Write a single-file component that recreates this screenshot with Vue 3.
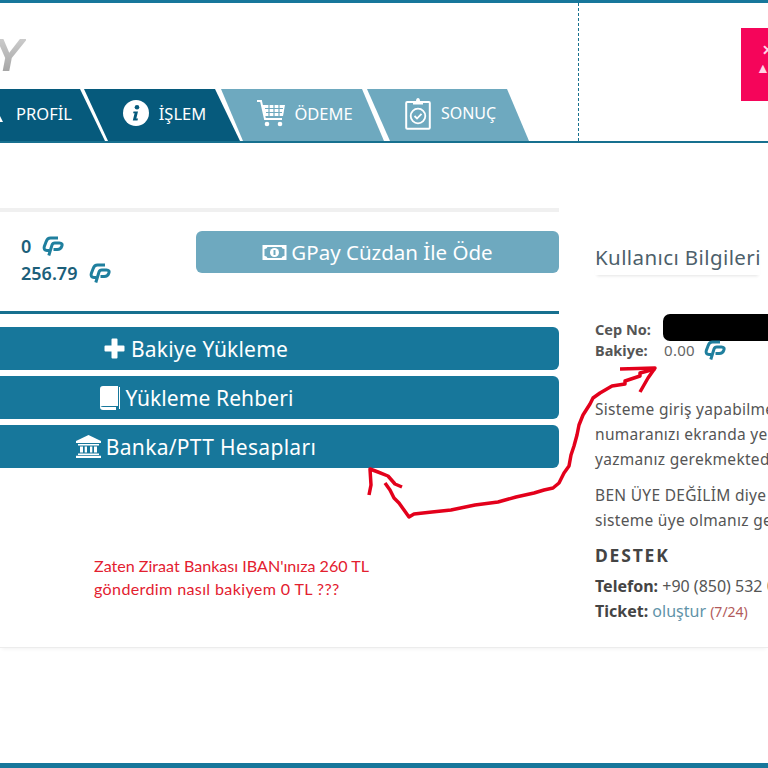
<script setup>
const tabs = [
  { id: 'profil', label: 'PROFİL', cls: 'tab-first' },
  { id: 'islem', label: 'İŞLEM', cls: 'tab-second' },
  { id: 'odeme', label: 'ÖDEME', cls: 'tab-third' },
  { id: 'sonuc', label: 'SONUÇ', cls: 'tab-fourth' },
];

// elle çizilmiş kırmızı ok
const longArrow = '655,369 640,373 640,376 625,381 625,384 612,386 600,393 593,398 590,404 583,415 579,425 577,435 574,446 571,455 569,466 564,473 559,483 553,488 544,490 534,493 516,497 498,502 475,505 451,510 432,512 414,514 409,517 404,510 399,503 394,498 390,490 385,483';
</script>

<template>
  <div class="page">
    <svg class="hidden-defs" width="0" height="0">
      <symbol id="gp" viewBox="0 0 22 20">
        <path d="M16 2H8.500C6.500 2 5 3.200 4.200 5.400L2.300 10.500C1.500 13 2.600 14.500 5 14.500H7" fill="none" stroke="currentColor" stroke-width="3" />
        <path d="M6.800 19.500 10 9C10.500 7.500 11.300 7 12.800 7H17.500C19.800 7 20.600 8.300 19.800 10.200 19 12.500 17.400 13.500 15.200 13.500H11.500" fill="none" stroke="currentColor" stroke-width="3" />
      </symbol>
    </svg>

    <header class="top">
      <div class="top-left">
        <div class="logo">Y</div>
        <nav class="tabs">
          <div v-for="tab in tabs" :key="tab.id" class="tab" :class="tab.cls">
            <svg v-if="tab.id === 'profil'" class="ico-person" width="6" height="12" viewBox="0 0 6 12"><path d="M0 1 5 11H0Z" fill="#fff" /></svg>
            <svg v-if="tab.id === 'islem'" class="ico" width="26" height="26" viewBox="0 0 26 26">
              <circle cx="13" cy="13" r="13" fill="#fff" />
              <circle cx="14" cy="7.200" r="2.300" fill="#065a7c" />
              <path d="M10.500 11.500H15L13.300 18.600H15L14.500 20.500H9.800L11.600 13.300H10.100Z" fill="#065a7c" />
            </svg>
            <svg v-if="tab.id === 'odeme'" class="ico" width="30" height="30" viewBox="0 0 30 30">
              <path d="M1 3H5L9 21H26" fill="none" stroke="#fff" stroke-width="2" />
              <path d="M6 7H29L27 18H8.500Z" fill="#fff" />
              <path d="M9 10.500H27M10 14.500H26M13 7V18M18 7V18M23 7V18" stroke="#6ea9bf" stroke-width="1.200" />
              <circle cx="11" cy="26" r="2.300" fill="#fff" />
              <circle cx="24" cy="26" r="2.300" fill="#fff" />
            </svg>
            <svg v-if="tab.id === 'sonuc'" class="ico" width="26" height="34" viewBox="0 0 26 34">
              <rect x="1.200" y="6" width="23.600" height="26.800" rx="1" fill="none" stroke="#fff" stroke-width="2" />
              <path d="M8 8.500V5H11C11 1 15 1 15 5H18V8.500Z" fill="#fff" />
              <circle cx="13" cy="20" r="7.300" fill="none" stroke="#fff" stroke-width="1.800" />
              <path d="M9.500 20 12 22.500 16.500 17.800" fill="none" stroke="#fff" stroke-width="1.800" />
            </svg>
            <span>{{ tab.label }}</span>
          </div>
        </nav>
      </div>
      <div class="top-right">
        <div class="promo">
          <span class="promo-x">✕</span>
          <span class="promo-tri">▲</span>
        </div>
      </div>
    </header>

    <main class="content">
      <section class="left">
        <div class="wallet">
          <div class="amounts">
            <div class="amount first">0 <svg class="gp" width="22" height="20"><use href="#gp" /></svg></div>
            <div class="amount">256.79 <svg class="gp" width="22" height="20"><use href="#gp" /></svg></div>
          </div>
          <button class="btn light">
            <svg width="25" height="15" viewBox="0 0 24 15">
              <path fill-rule="evenodd" d="M0 0H24V15H0ZM2 4V11A3 3 0 0 1 5 13H19A3 3 0 0 1 22 11V4A3 3 0 0 1 19 2H5A3 3 0 0 1 2 4Z" fill="#fff" />
              <circle cx="12" cy="7.500" r="4.500" fill="#fff" />
              <rect x="11" y="5" width="2" height="5" fill="#6ea9bf" />
            </svg>
            GPay Cüzdan İle Öde
          </button>
        </div>

        <div class="actions">
          <button class="btn">
            <svg width="21" height="21" viewBox="0 0 21 21"><path d="M7.500 1.500A1 1 0 0 1 8.500.5H12.500A1 1 0 0 1 13.500 1.500V7.500H19.500A1 1 0 0 1 20.500 8.500V12.500A1 1 0 0 1 19.500 13.500H13.500V19.500A1 1 0 0 1 12.500 20.500H8.500A1 1 0 0 1 7.500 19.500V13.500H1.500A1 1 0 0 1 .5 12.500V8.500A1 1 0 0 1 1.500 7.500H7.500Z" fill="#fff" /></svg>
            Bakiye Yükleme
          </button>
          <button class="btn tight">
            <svg width="21" height="24" viewBox="0 0 21 24">
              <path d="M4 0H19V20H4C2 20 1 21 1 22V3C1 1 2 0 4 0Z" fill="#fff" />
              <path d="M1 21C1 23 2 24 4 24H17V21Z" fill="#fff" />
              <path d="M20.500 1V23" stroke="#fff" stroke-width="1" />
            </svg>
            Yükleme Rehberi
          </button>
          <button class="btn bank">
            <svg width="25" height="23" viewBox="0 0 25 23">
              <path d="M12.500 0 25 6V8H0V6Z" fill="#fff" />
              <path d="M2 9H23V10.500H2ZM4 11.500H7V17.500H4ZM8.700 11.500H11V17.500H8.700ZM14 11.500H16.300V17.500H14ZM18 11.500H21V17.500H18ZM2 18.500H23V20H2ZM0 20.700H25V23H0Z" fill="#fff" />
            </svg>
            Banka/PTT Hesapları
          </button>
        </div>

        <p class="note">
          Zaten Ziraat Bankası IBAN'ınıza 260 TL<br />
          <span class="note-second">gönderdim nasıl bakiyem 0 TL ???</span>
        </p>
      </section>

      <aside class="right">
        <h3 class="side-title">Kullanıcı Bilgileri</h3>
        <div class="user-row"><b>Cep No:</b><span class="redacted"></span></div>
        <div class="user-row balance"><b>Bakiye:</b><span class="balance-val">0.00</span><svg class="gp" width="22" height="20"><use href="#gp" /></svg></div>
        <p class="info">Sisteme giriş yapabilmek için cep<br />numaranızı ekranda yer alan<br />yazmanız gerekmektedir.</p>
        <p class="info">BEN ÜYE DEĞİLİM diye<br />sisteme üye olmanız gerekir.</p>
        <div class="support">DESTEK</div>
        <div class="contact"><b>Telefon:</b> +90 (850) 532 00 00</div>
        <div class="contact"><b>Ticket:</b> <a class="link">oluştur</a> <small>(7/24)</small></div>
      </aside>
    </main>

    <footer class="bottom"></footer>

    <svg class="scribble" width="768" height="768" viewBox="0 0 768 768">
      <g fill="none" stroke="#e3001b" stroke-width="3.500" stroke-linejoin="round">
        <polyline :points="longArrow" />
        <polyline points="620,369 655,368 648,378 640,392" />
        <polyline points="369,495 371,485 370,469 378,472 388,476 395,484 402,487" />
      </g>
    </svg>
  </div>
</template>

<style>
html, body { margin: 0; background: #fff; }
</style>

<style scoped>
.page {
  position: relative;
  width: 768px;
  height: 768px;
  overflow: hidden;
  display: flex;
  flex-direction: column;
  background: #fff;
  font-family: "Noto Sans", "Open Sans", sans-serif;
  color: #555;
}
.hidden-defs { position: absolute; }

/* ust alan */
.top {
  height: 138px;
  flex: none;
  display: flex;
  border-top: 3px solid #17779b;
  border-bottom: 2px solid #17708f;
}
.top-left {
  width: 578px;
  flex: none;
  border-right: 1px dashed #17708f;
  display: flex;
  flex-direction: column;
  justify-content: space-between;
}
.logo {
  width: 26px;
  height: 44px;
  margin: 30px 0 0;
  font: italic 700 46px/44px "Liberation Sans", sans-serif;
  text-indent: -7px;
  overflow: hidden;
  color: transparent;
  background: linear-gradient(180deg, #d2d2d2, #9f9f9f);
  -webkit-background-clip: text;
  background-clip: text;
}
.tabs { display: flex; height: 52px; }
.tab {
  display: flex;
  align-items: center;
  justify-content: center;
  gap: 10px;
  padding-bottom: 4px;
  box-sizing: border-box;
  color: #fff;
  font-size: 16.500px;
  background: #065a7c;
}
.tab-first { width: 105px; clip-path: polygon(0 0, 80px 0, 105px 100%, 0 100%); justify-content: flex-start; gap: 12px; }
.tab-second { width: 156px; margin-left: -21px; padding-left: 5px; clip-path: polygon(0 0, 131px 0, 100% 100%, 24px 100%); }
.tab-third { width: 163px; margin-left: -19px; padding-left: 4px; gap: 8px; background: #6ea9bf; clip-path: polygon(0 0, 141px 0, 100% 100%, 22px 100%); }
.tab-fourth { width: 162px; margin-left: -17px; padding-left: 5px; font-size: 16px; background: #6ea9bf; clip-path: polygon(0 0, 140px 0, 100% 100%, 23px 100%); }
.ico-person { margin-top: 8px; margin-left: -2px; }

.top-right { flex: 1; padding: 25px 0 0 162px; }
.promo {
  width: 60px;
  height: 73px;
  background: #f5055a;
  color: #ffd6e4;
  display: flex;
  flex-direction: column;
  padding: 13px 0 0 15px;
  box-sizing: border-box;
  font: 700 14px/18px "Liberation Sans", sans-serif;
}
.promo-x { margin-left: 6px; }

/* icerik */
.content {
  flex: 1;
  display: flex;
  padding-top: 65px;
  border-bottom: 1px solid #ececec;
  box-shadow: 0 3px 4px -2px #f2f2f2;
  margin-bottom: 115px;
}
/* sol kolon ekranin solundan tasiyor */
.left { width: 726px; margin-left: -167px; flex: none; }
.wallet {
  height: 80px;
  border-top: 4px solid #f0f0f0;
  border-bottom: 3px solid #17708f;
  display: flex;
  justify-content: space-between;
  padding: 19px 0 0 188px;
}
.amounts { display: flex; flex-direction: column; padding-top: 1px; }
.amount {
  display: flex;
  align-items: center;
  gap: 12px;
  height: 27px;
  font-size: 18px;
  font-weight: 600;
  color: #1c5f7a;
}
.amount.first { gap: 11px; }
.gp { color: #1f7f9e; }

.btn {
  display: flex;
  align-items: center;
  justify-content: center;
  gap: 6px;
  width: 100%;
  height: 43px;
  padding: 0;
  border: 0;
  border-radius: 6px;
  background: #17779b;
  color: #fff;
  font-family: inherit;
  font-size: 21px;
  letter-spacing: .2px;
}
.btn.light { width: 363px; height: 42px; gap: 4px; background: #6ea9bf; font-size: 20.500px; letter-spacing: 0; }
.btn.tight { gap: 6px; letter-spacing: .1px; }
.btn.bank { gap: 5px; letter-spacing: .3px; }
.actions {
  display: flex;
  flex-direction: column;
  gap: 6px;
  margin-top: 13px;
}
.note {
  margin: 86px 0 0 261px;
  font: 16.100px/23px Lato, sans-serif;
  color: #e3202f;
}
.note-second { letter-spacing: .35px; }

.right { margin-left: 36px; width: 400px; flex: none; white-space: nowrap; }
.side-title {
  margin: 36px 0 0;
  width: 165px;
  padding-bottom: 5px;
  font-size: 20.500px;
  font-weight: 400;
  letter-spacing: .4px;
  line-height: 26px;
  color: #4d5f6b;
  box-shadow: 0 3px 3px -2px #e4e4e4;
}
.user-row {
  display: flex;
  align-items: center;
  height: 24px;
  font-size: 14.500px;
  color: #555;
}
.side-title + .user-row { margin-top: 42px; }
.user-row b { width: 68px; }
.redacted {
  width: 120px;
  height: 27px;
  margin-top: -4px;
  background: #000;
  border-radius: 7px 0 0 7px;
}
.balance { height: 18px; }
.balance-val { font-size: 15px; letter-spacing: .3px; color: #666; margin: 0 9px 0 1px; }
.info {
  margin: 0 0 11px;
  font-size: 15.500px;
  letter-spacing: .3px;
  line-height: 25px;
  color: #555;
}
.balance + .info { margin-top: 38px; }
.support { font-size: 17.500px; font-weight: 700; letter-spacing: 1.800px; line-height: 22px; color: #444; }
.contact { font-size: 16px; line-height: 25px; color: #555; }
.support + .contact { margin-top: 8px; }
.contact b { color: #444; }
.link { color: #5f93a8; }
.contact small { font-size: 14px; color: #b25a5a; }

.bottom { height: 5px; flex: none; background: #17779b; }

.scribble { position: absolute; left: 0; top: 0; pointer-events: none; }
</style>
